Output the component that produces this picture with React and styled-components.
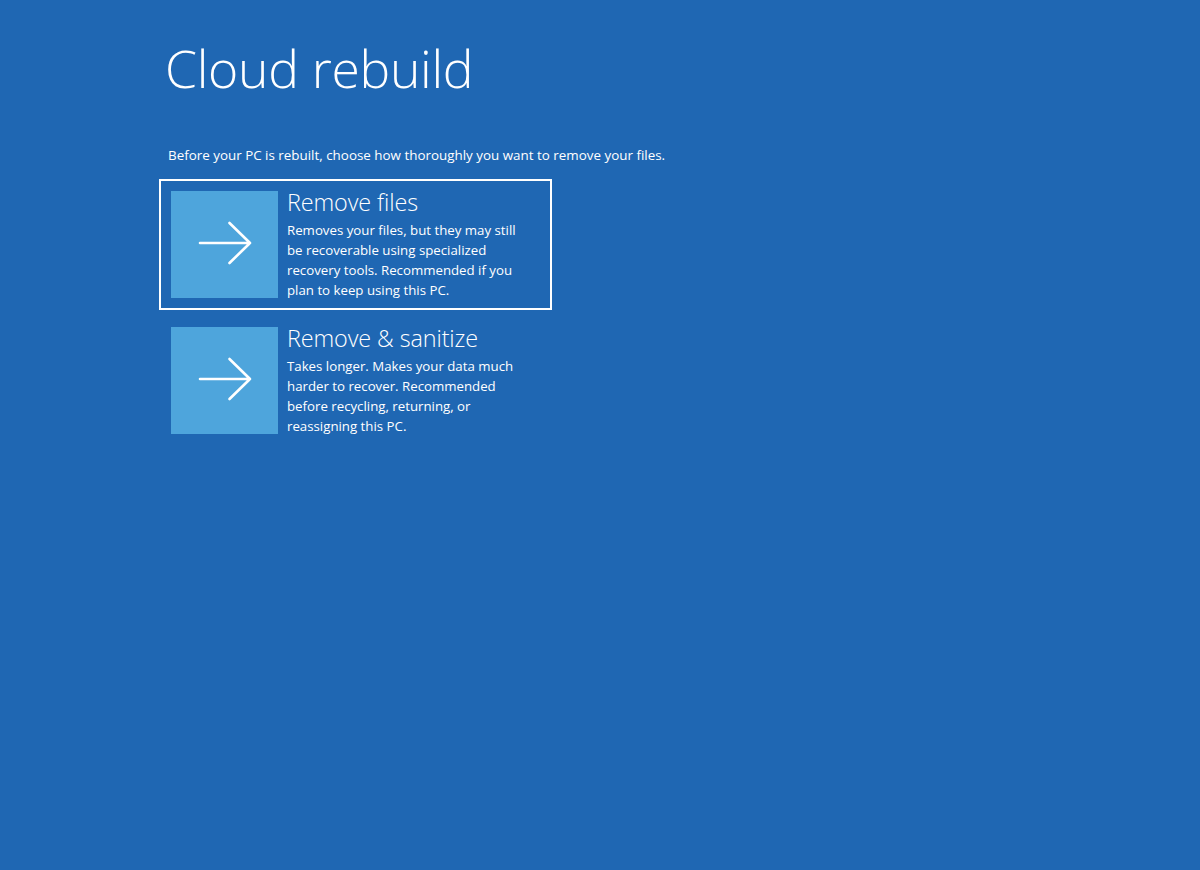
import React from 'react';
import styled, { createGlobalStyle } from 'styled-components';

const GlobalStyle = createGlobalStyle`
    html, body {
        margin: 0;
        padding: 0;
        background: #1f67b3;
    }
    body {
        font-family: "Open Sans", "Noto Sans", sans-serif;
        color: #ffffff;
    }
`;

const Page = styled.div`
    box-sizing: border-box;
    height: 870px;
    width: 1200px;
    background: #1f67b3;
    padding: 33px 0 0 159px;
`;

const Title = styled.h1`
    font-weight: 300;
    font-size: 51.6px;
    line-height: 70px;
    margin: 0 0 0 6px;
    letter-spacing: -0.3px;
`;

const Intro = styled.p`
    font-size: 13.4px;
    line-height: 16px;
    margin: 44px 0 16px 9px;
`;

const OptionList = styled.div`
    display: flex;
    flex-direction: column;
    gap: 5px;
`;

const Option = styled.button`
    box-sizing: border-box;
    display: flex;
    align-items: flex-start;
    gap: 9px;
    width: 393px;
    height: 131px;
    padding: 10px;
    background: transparent;
    border: 2px solid ${props => (props.$selected ? '#ffffff' : 'transparent')};
    color: inherit;
    font: inherit;
    text-align: left;
    cursor: pointer;
`;

const Tile = styled.div`
    flex: none;
    width: 107px;
    height: 107px;
    background: #4ea5dc;
    display: flex;
    align-items: center;
    justify-content: center;
`;

const Text = styled.div`
    display: flex;
    flex-direction: column;
    max-width: 238px;
`;

const Heading = styled.div`
    font-size: 23.4px;
    font-weight: 300;
    line-height: 26px;
    margin-top: -2px;
    letter-spacing: -0.1px;
`;

const Description = styled.div`
    font-size: 13.25px;
    line-height: 20px;
    margin-top: 5px;
`;

const Arrow = () => (
    <svg width="107" height="107" viewBox="0 0 107 107" fill="none">
        <path
            d="M29 52H79M58.5 32L79 52L58.5 72"
            stroke="#ffffff"
            strokeWidth="2.6"
            strokeLinecap="round"
            strokeLinejoin="round"
        />
    </svg>
);

const options = [
    {
        title: 'Remove files',
        text: 'Removes your files, but they may still be recoverable using specialized recovery tools. Recommended if you plan to keep using this PC.',
        selected: true
    },
    {
        title: 'Remove & sanitize',
        text: 'Takes longer. Makes your data much harder to recover. Recommended before recycling, returning, or reassigning this PC.',
        selected: false
    }
];

export default function App() {
    return (
        <>
            <GlobalStyle />
            <Page>
                <Title>Cloud rebuild</Title>
                <Intro>Before your PC is rebuilt, choose how thoroughly you want to remove your files.</Intro>
                <OptionList>
                    {options.map(option => (
                        <Option key={option.title} $selected={option.selected}>
                            <Tile>
                                <Arrow />
                            </Tile>
                            <Text>
                                <Heading>{option.title}</Heading>
                                <Description>{option.text}</Description>
                            </Text>
                        </Option>
                    ))}
                </OptionList>
            </Page>
        </>
    );
}
